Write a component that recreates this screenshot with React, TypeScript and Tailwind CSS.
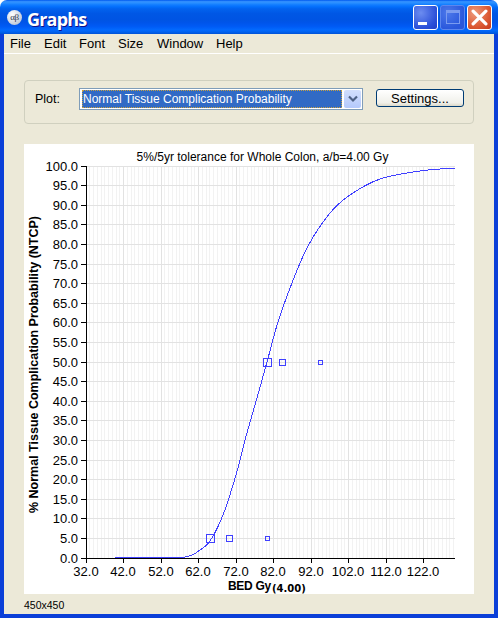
import React from 'react';

const menus = [
  { label: 'File', cls: 'w-[34px]' },
  { label: 'Edit', cls: 'w-[35px]' },
  { label: 'Font', cls: 'w-[39px]' },
  { label: 'Size', cls: 'w-[39px]' },
  { label: 'Window', cls: 'w-[59px]' },
  { label: 'Help', cls: 'w-[40px]' },
];

// pixel rows / columns read off the reference
const yTicks = Array.from({ length: 21 }, (_, i) => ({
  y: Math.floor(166 + 19.6 * i),
  label: (100 - i * 5).toFixed(1),
}));
const xTicks = [
  { x: 86, label: '32.0' },
  { x: 123, label: '42.0' },
  { x: 161, label: '52.0' },
  { x: 198, label: '62.0' },
  { x: 236, label: '72.0' },
  { x: 273, label: '82.0' },
  { x: 311, label: '92.0' },
  { x: 348, label: '102.0' },
  { x: 386, label: '112.0' },
  { x: 423, label: '122.0' },
];
const minorX = Array.from({ length: 99 }, (_, i) => Math.floor(86 + 3.75 * i));

const curvePts = [
  [183, 557.5], [192, 555], [200, 550], [210, 541], [223, 515], [236, 475], [245, 440], [257, 398],
  [267, 362], [278, 322], [292, 283], [308, 246], [330, 213], [350, 195], [380, 179], [420, 171],
  [455, 168],
];

// smooth the read-off points a little (catmull-rom)
const curvePath = curvePts.reduce((d, p, i) => {
  if (i === 0) return `M${p[0]} ${p[1]}`;
  const p0 = curvePts[Math.max(i - 2, 0)];
  const p1 = curvePts[i - 1];
  const p3 = curvePts[Math.min(i + 1, curvePts.length - 1)];
  const c1 = [p1[0] + (p[0] - p0[0]) / 6, p1[1] + (p[1] - p0[1]) / 6];
  const c2 = [p[0] - (p3[0] - p1[0]) / 6, p[1] - (p3[1] - p1[1]) / 6];
  return `${d} C${c1[0]} ${c1[1]} ${c2[0]} ${c2[1]} ${p[0]} ${p[1]}`;
}, '');

const markers = [
  { x: 206, y: 534, s: 9 },
  { x: 263, y: 358, s: 9 },
  { x: 226, y: 535, s: 7 },
  { x: 279, y: 359, s: 7 },
  { x: 265, y: 536, s: 5 },
  { x: 318, y: 360, s: 5 },
];

const Chart = () => (
  <svg viewBox="24 144 450 450" className="block h-[450px] w-[450px] bg-white font-['Liberation_Sans',sans-serif]">
    <g shapeRendering="crispEdges" fill="none">
      {minorX.map((x) => (
        <line key={x} x1={x + 0.5} x2={x + 0.5} y1={166} y2={558} stroke="#F2F2F2" />
      ))}
      {yTicks.map((t) => (
        <line key={t.y} x1={86} x2={455} y1={t.y + 0.5} y2={t.y + 0.5} stroke="#E2E2E2" />
      ))}
      {xTicks.slice(1).map((t) => (
        <line key={t.x} x1={t.x + 0.5} x2={t.x + 0.5} y1={166} y2={558} stroke="#E2E2E2" />
      ))}
      {yTicks.map((t) => (
        <line key={t.y} x1={81} x2={86} y1={t.y + 0.5} y2={t.y + 0.5} stroke="#000" />
      ))}
      {xTicks.map((t) => (
        <line key={t.x} x1={t.x + 0.5} x2={t.x + 0.5} y1={558} y2={563} stroke="#000" />
      ))}
      <line x1={86.5} x2={86.5} y1={166} y2={559} stroke="#000" />
      <line x1={86} x2={455} y1={558.5} y2={558.5} stroke="#000" />
      <line x1={115} x2={183} y1={557.5} y2={557.5} stroke="#4040FF" />
      <path d={curvePath} stroke="#4040FF" />
      {markers.map((m) => (
        <rect key={`${m.x}-${m.y}`} x={m.x + 0.5} y={m.y + 0.5} width={m.s - 1} height={m.s - 1} stroke="#4040FF" />
      ))}
    </g>

    <text x={262.5} y={161} textAnchor="middle" className="text-[12px]">
      5%/5yr tolerance for Whole Colon, a/b=4.00 Gy
    </text>
    {yTicks.map((t) => (
      <text key={t.y} x={78} y={t.y + 5} textAnchor="end" className="text-[13px]">
        {t.label}
      </text>
    ))}
    {xTicks.map((t) => (
      <text key={t.x} x={t.x} y={576} textAnchor="middle" className="text-[13px]">
        {t.label}
      </text>
    ))}
    <text
      transform="translate(38 364.5) rotate(-90)"
      textAnchor="middle"
      className="text-[12.5px] font-bold"
    >
      % Normal Tissue Complication Probability (NTCP)
    </text>
    <text x={228} y={590} className="text-[12px] font-bold tracking-[-0.3px]">
      BED Gy
    </text>
    <text x={272} y={592} className="font-['DejaVu_Sans',sans-serif] text-[10px] font-bold">
      (4.00)
    </text>
  </svg>
);

const CaptionButton = ({ cls, children }: { cls: string; children: React.ReactNode }) => (
  <div className={`flex h-[25px] w-[25px] rounded-[3px] ${cls}`}>{children}</div>
);

export default function App() {
  return (
    <div className="h-[618px] w-[498px] overflow-hidden font-['Liberation_Sans',sans-serif] text-black">
      <div className="flex h-[34px] items-center rounded-t-[7px] bg-[linear-gradient(180deg,#0058EE_0%,#3593FF_5%,#288EFF_9%,#127DFF_14%,#036FFC_20%,#0262EE_26%,#0057E5_40%,#0054E3_58%,#0055EB_68%,#005BF5_78%,#026AFE_88%,#0062EF_94%,#0052D6_100%)] pl-[7px] pr-[6px]">
        <div className="mt-[1px] flex h-[15px] w-[15px] items-center justify-center rounded-full bg-[radial-gradient(circle_at_35%_30%,#FFFFFF,#C4CDDC_70%,#8FA0BC)] font-['Liberation_Serif',serif] text-[9px] leading-none tracking-[-0.5px] text-[#30384a]">
          αβ
        </div>
        <span className="ml-[5px] mt-[4px] font-['Open_Sans',sans-serif] text-[18px] font-bold leading-none tracking-[-0.8px] text-white [text-shadow:1px_1px_0_#0F1089]">
          Graphs
        </span>
        <div className="ml-auto flex gap-[2px]">
          <CaptionButton cls="border border-white bg-[radial-gradient(circle_at_30%_30%,#6C8CF0,#2A4FD8_70%,#2040C8)] items-end justify-start">
            <div className="mb-[4px] ml-[4px] h-[3px] w-[9px] bg-white" />
          </CaptionButton>
          <CaptionButton cls="border border-[#5C86EE] bg-[radial-gradient(circle_at_30%_30%,#4C78EA,#2A58DC_70%,#2A55D8)] items-center justify-center">
            <div className="h-[14px] w-[14px] border border-[#7A9BF0] border-t-[3px]" />
          </CaptionButton>
          <CaptionButton cls="border border-white bg-[radial-gradient(circle_at_30%_30%,#EE9A7C,#DC5A34_60%,#C43A1C)] items-center justify-center">
            <svg viewBox="0 0 16 16" className="h-[17px] w-[17px]">
              <path d="M2 2 L14 14 M14 2 L2 14" stroke="#fff" strokeWidth="3" strokeLinecap="round" />
            </svg>
          </CaptionButton>
        </div>
      </div>

      <div className="flex h-[584px] flex-col border-x-4 border-b-4 border-[#0A3FD8] bg-[#ECE9D8]">
        <div className="flex h-[20px] shrink-0 items-center border-b border-white pl-[6px] text-[13px]">
          {menus.map((m) => (
            <span key={m.label} className={m.cls}>
              {m.label}
            </span>
          ))}
        </div>

        <div className="px-[20px] pt-[26px]">
          <div className="flex h-[44px] items-start rounded-[4px] border border-[#D0D0BF] pl-[10px] pt-[7px]">
            <span className="w-[44px] pt-[2px] text-[12.5px] leading-[18px]">Plot:</span>
            <div className="flex h-[22px] w-[284px] items-center border border-[#7F9DB9] bg-white pl-[2px] pr-[1px]">
              <div className="flex h-[18px] w-[260px] items-center border border-dotted border-[#C8A040] bg-[#316AC5] text-[12px] text-white">
                Normal Tissue Complication Probability
              </div>
              <div className="ml-auto flex h-[18px] w-[17px] items-center justify-center rounded-[2px] bg-[linear-gradient(180deg,#D2DFFD,#B4C9FC)]">
                <svg viewBox="0 0 10 8" className="h-[8px] w-[10px]">
                  <path d="M1 1.5 L5 5.5 L9 1.5" fill="none" stroke="#4D6185" strokeWidth="2.2" />
                </svg>
              </div>
            </div>
            <button className="ml-[13px] mt-[1px] h-[18px] w-[88px] rounded-[3px] border border-[#003C74] bg-[linear-gradient(180deg,#FFFFFF,#F0F0EA_80%,#DCD8C8)] pt-[1px] text-center text-[13px] leading-[14px]">
              Settings...
            </button>
          </div>

          <div className="mt-[20px]">
            <Chart />
          </div>
          <div className="mt-[5px] text-[10.5px] leading-[12px]">450x450</div>
        </div>
      </div>
    </div>
  );
}
